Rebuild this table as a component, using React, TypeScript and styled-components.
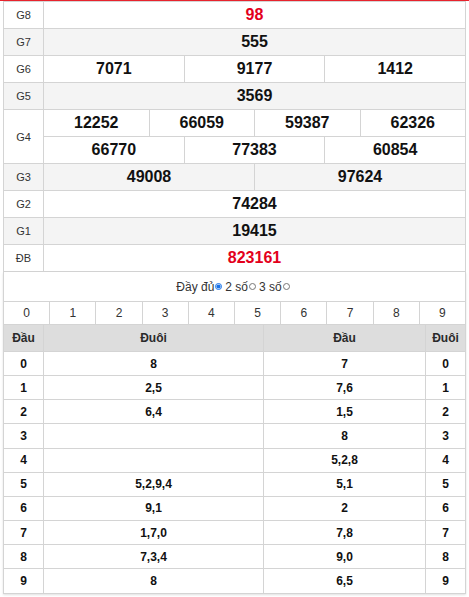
import React from "react";
import styled, { createGlobalStyle } from "styled-components";

const GlobalStyle = createGlobalStyle`
  html, body { margin: 0; padding: 0; background: #fff; }
  body { font-family: "Liberation Sans", Arial, sans-serif; color: #222; }
`;

const BORDER = "#d4d4d4";

const Page = styled.div`
  border-top: 1px solid #e8232d;
  padding: 0 3px 6px 3px;
`;

const ResultTable = styled.div`
  border: 1px solid ${BORDER};
  border-bottom: none;
`;

const PrizeRow = styled.div<{ $alt?: boolean }>`
  display: flex;
  border-bottom: 1px solid ${BORDER};
  background: ${(p) => (p.$alt ? "#f4f4f4" : "#fff")};
`;

const PrizeLabel = styled.div`
  width: 39px;
  flex: none;
  border-right: 1px solid ${BORDER};
  display: flex;
  align-items: center;
  justify-content: center;
  font-size: 11px;
  color: #333;
`;

const PrizeBody = styled.div`
  flex: 1;
  display: flex;
  flex-direction: column;
`;

const NumberLine = styled.div`
  display: flex;
  height: 26px;
  & + & {
    border-top: 1px solid ${BORDER};
  }
`;

const NumberCell = styled.div<{ $red?: boolean }>`
  flex: 1;
  display: flex;
  align-items: center;
  justify-content: center;
  font-size: 16px;
  font-weight: bold;
  color: ${(p) => (p.$red ? "#e3001b" : "#111")};
  & + & {
    border-left: 1px solid ${BORDER};
  }
`;

const LotoBox = styled.div`
  border: 1px solid ${BORDER};
  border-top: none;
  box-shadow: 0 1px 2px rgba(0, 0, 0, 0.12);
`;

const OptionBar = styled.div`
  height: 29px;
  display: flex;
  align-items: center;
  justify-content: center;
  font-size: 12px;
  color: #333;
  border-bottom: 1px solid ${BORDER};
`;

const Radio = styled.input`
  width: 7px;
  height: 7px;
  margin: 0 3px 0 1px;
  accent-color: #1a73e8;
`;

const DigitRow = styled.div`
  display: flex;
  height: 22px;
  border-bottom: 1px solid ${BORDER};
`;

const DigitCell = styled.div`
  flex: 1;
  display: flex;
  align-items: center;
  justify-content: center;
  font-size: 12px;
  color: #333;
  & + & {
    border-left: 1px solid ${BORDER};
  }
`;

const LotoGrid = styled.div<{ $head?: boolean }>`
  display: grid;
  grid-template-columns: 40px 220px 162px 1fr;
  height: ${(p) => (p.$head ? "27px" : "24.15px")};
  box-sizing: border-box;
  border-bottom: 1px solid ${BORDER};
  background: ${(p) => (p.$head ? "#dddddd" : "#fff")};
  &:last-child {
    border-bottom: none;
  }
`;

const LotoCell = styled.div<{ $head?: boolean }>`
  display: flex;
  align-items: center;
  justify-content: center;
  font-size: 12px;
  font-weight: bold;
  color: ${(p) => (p.$head ? "#2a2a2a" : "#111")};
  &:not(:last-child) {
    border-right: 1px solid ${BORDER};
  }
`;

type Prize = { label: string; lines: string[][]; alt?: boolean; red?: boolean };

const prizes: Prize[] = [
  { label: "G8", lines: [["98"]], red: true },
  { label: "G7", lines: [["555"]], alt: true },
  { label: "G6", lines: [["7071", "9177", "1412"]] },
  { label: "G5", lines: [["3569"]], alt: true },
  { label: "G4", lines: [["12252", "66059", "59387", "62326"], ["66770", "77383", "60854"]] },
  { label: "G3", lines: [["49008", "97624"]], alt: true },
  { label: "G2", lines: [["74284"]] },
  { label: "G1", lines: [["19415"]], alt: true },
  { label: "ĐB", lines: [["823161"]], red: true },
];

const heads = ["8", "2,5", "6,4", "", "", "5,2,9,4", "9,1", "1,7,0", "7,3,4", "8"];
const tails = ["7", "7,6", "1,5", "8", "5,2,8", "5,1", "2", "7,8", "9,0", "6,5"];

export default function App() {
  return (
    <>
      <GlobalStyle />
      <Page>
        <ResultTable>
          {prizes.map((p) => (
            <PrizeRow key={p.label} $alt={p.alt}>
              <PrizeLabel>{p.label}</PrizeLabel>
              <PrizeBody>
                {p.lines.map((line, i) => (
                  <NumberLine key={i}>
                    {line.map((n) => (
                      <NumberCell key={n} $red={p.red}>
                        {n}
                      </NumberCell>
                    ))}
                  </NumberLine>
                ))}
              </PrizeBody>
            </PrizeRow>
          ))}
        </ResultTable>
        <LotoBox>
          <OptionBar>
            Đầy đủ
            <Radio type="radio" name="mode" value="full" defaultChecked />
            2 số
            <Radio type="radio" name="mode" value="2" />
            3 số
            <Radio type="radio" name="mode" value="3" />
          </OptionBar>
          <DigitRow>
            {Array.from({ length: 10 }, (_, i) => (
              <DigitCell key={i}>{i}</DigitCell>
            ))}
          </DigitRow>
          <LotoGrid $head>
            <LotoCell $head>Đầu</LotoCell>
            <LotoCell $head>Đuôi</LotoCell>
            <LotoCell $head>Đầu</LotoCell>
            <LotoCell $head>Đuôi</LotoCell>
          </LotoGrid>
          {heads.map((h, i) => (
            <LotoGrid key={i}>
              <LotoCell>{i}</LotoCell>
              <LotoCell>{h}</LotoCell>
              <LotoCell>{tails[i]}</LotoCell>
              <LotoCell>{i}</LotoCell>
            </LotoGrid>
          ))}
        </LotoBox>
      </Page>
    </>
  );
}
